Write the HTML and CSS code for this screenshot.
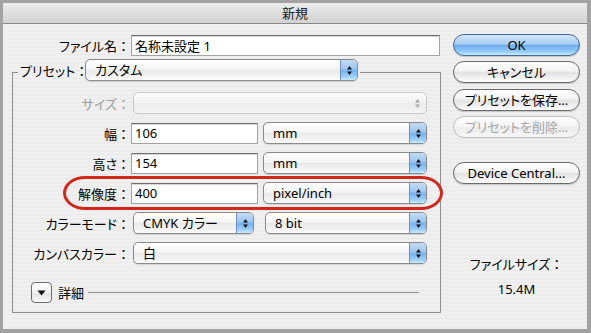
FILE: index.html
```html
<!DOCTYPE html>
<html lang="ja">
<head>
  <meta charset="UTF-8" />
  <title>新規</title>
  <link rel="stylesheet" href="styles.css">
</head>
<body>
  <div class="window">
    <div class="titlebar">新規</div>

    <div class="dialog">
      <div class="main">
        <div class="name-row">
          <label class="name-label" for="filename">ファイル名<span class="colon">：</span></label>
          <input class="field name-field" id="filename" type="text" value="名称未設定 1">
        </div>

        <fieldset class="group">
          <legend class="group-legend">
            <span class="legend-label">プリセット<span class="colon">：</span></span>
            <div class="popup preset-popup">
              <span class="popup-text">カスタム</span>
              <span class="popup-arrows"><svg width="7" height="13" viewBox="0 0 7 13"><path d="M3.5 2 L6 5.5 H1 Z M3.5 11 L6 7.5 H1 Z" fill="#111"/></svg></span>
            </div>
          </legend>

          <div class="rows">
            <span class="row-label disabled">サイズ<span class="colon">：</span></span>
            <div class="row-fields">
              <div class="popup popup-disabled full">
                <span class="popup-text"></span>
                <span class="popup-arrows"><svg width="7" height="13" viewBox="0 0 7 13"><path d="M3.5 2 L6 5.5 H1 Z M3.5 11 L6 7.5 H1 Z" fill="#a6a6a6"/></svg></span>
              </div>
            </div>

            <span class="row-label">幅<span class="colon">：</span></span>
            <div class="row-fields">
              <input class="field num-field" type="text" value="106">
              <div class="popup unit-popup">
                <span class="popup-text">mm</span>
                <span class="popup-arrows"><svg width="7" height="13" viewBox="0 0 7 13"><path d="M3.5 2 L6 5.5 H1 Z M3.5 11 L6 7.5 H1 Z" fill="#111"/></svg></span>
              </div>
            </div>

            <span class="row-label">高さ<span class="colon">：</span></span>
            <div class="row-fields">
              <input class="field num-field" type="text" value="154">
              <div class="popup unit-popup">
                <span class="popup-text">mm</span>
                <span class="popup-arrows"><svg width="7" height="13" viewBox="0 0 7 13"><path d="M3.5 2 L6 5.5 H1 Z M3.5 11 L6 7.5 H1 Z" fill="#111"/></svg></span>
              </div>
            </div>

            <span class="row-label">解像度<span class="colon">：</span></span>
            <div class="row-fields">
              <input class="field num-field" type="text" value="400">
              <div class="popup unit-popup">
                <span class="popup-text">pixel/inch</span>
                <span class="popup-arrows"><svg width="7" height="13" viewBox="0 0 7 13"><path d="M3.5 2 L6 5.5 H1 Z M3.5 11 L6 7.5 H1 Z" fill="#111"/></svg></span>
              </div>
            </div>

            <span class="row-label">カラーモード<span class="colon">：</span></span>
            <div class="row-fields">
              <div class="popup mode-popup">
                <span class="popup-text">CMYK カラー</span>
                <span class="popup-arrows"><svg width="7" height="13" viewBox="0 0 7 13"><path d="M3.5 2 L6 5.5 H1 Z M3.5 11 L6 7.5 H1 Z" fill="#111"/></svg></span>
              </div>
              <div class="popup bit-popup">
                <span class="popup-text">8 bit</span>
                <span class="popup-arrows"><svg width="7" height="13" viewBox="0 0 7 13"><path d="M3.5 2 L6 5.5 H1 Z M3.5 11 L6 7.5 H1 Z" fill="#111"/></svg></span>
              </div>
            </div>

            <span class="row-label">カンバスカラー<span class="colon">：</span></span>
            <div class="row-fields">
              <div class="popup full">
                <span class="popup-text">白</span>
                <span class="popup-arrows"><svg width="7" height="13" viewBox="0 0 7 13"><path d="M3.5 2 L6 5.5 H1 Z M3.5 11 L6 7.5 H1 Z" fill="#111"/></svg></span>
              </div>
            </div>

            <div class="highlight"></div>
          </div>

          <div class="details">
            <button class="disclosure" type="button"><svg width="9" height="6" viewBox="0 0 9 6"><path d="M0.5 0.5 H8.5 L4.5 5.5 Z" fill="#111"/></svg></button>
            <span class="details-label">詳細</span>
            <span class="details-line"></span>
          </div>
        </fieldset>
      </div>

      <div class="side">
        <button class="btn btn-default" type="button">OK</button>
        <button class="btn" type="button">キャンセル</button>
        <button class="btn btn-save" type="button">プリセットを保存...</button>
        <button class="btn btn-disabled" type="button">プリセットを削除...</button>
        <button class="btn btn-device" type="button">Device Central...</button>
        <div class="filesize-label">ファイルサイズ<span class="colon">：</span></div>
        <div class="filesize-value">15.4M</div>
      </div>
    </div>
  </div>
</body>
</html>
```

FILE: styles.css
```css
* {
  box-sizing: border-box;
}
body {
  margin: 0;
  background: #a2a2a2;
  font-family: 'Noto Sans', 'Noto Sans CJK JP', sans-serif;
  font-size: 13px;
  font-feature-settings: "palt";
  color: #000;
}
.colon {
  font-feature-settings: normal;
}
.window {
  margin: 3px 4px 4px 3px;
  height: 326px;
  background: repeating-linear-gradient(#f0f0f0 0, #f0f0f0 3px, #e9e9e9 3px, #e9e9e9 4px);
}
.titlebar {
  height: 21px;
  line-height: 20px;
  text-align: center;
  border-bottom: 1px solid #878787;
  background: linear-gradient(#ebebeb, #d3d3d3);
  color: #222;
}
.dialog {
  display: flex;
  gap: 12px;
  padding: 11px 0 0 9px;
}
.main {
  width: 429px;
}
.name-row {
  display: flex;
  align-items: center;
  height: 21px;
}
.name-label {
  width: 118px;
  margin-right: 1px;
  text-align: right;
  white-space: nowrap;
}
.field {
  height: 21px;
  margin: 0;
  padding: 0 3px;
  border: 1px solid #a3a3a3;
  border-top-color: #6e6e6e;
  box-shadow: inset 0 1px 0 #d6d6d6;
  background: #fff;
  font: inherit;
  color: #000;
  outline: none;
}
.name-field {
  width: 309px;
}
.num-field {
  width: 127px;
}
.group {
  position: relative;
  width: 429px;
  margin: 3px 0 0;
  padding: 0 0 9px;
  border: 1px solid #8f8f8f;
  min-width: 0;
}
.group-legend {
  display: flex;
  align-items: center;
  margin-left: 5px;
  padding: 0 2px 4px;
}
.legend-label {
  width: 65px;
  white-space: nowrap;
}
.rows {
  position: relative;
  display: grid;
  grid-template-columns: 118px 296px;
  grid-auto-rows: 22px;
  row-gap: 8px;
  margin-top: 7px;
}
.row-label {
  align-self: center;
  padding-right: 1px;
  text-align: right;
  white-space: nowrap;
}
.row-label.disabled {
  color: #9c9c9c;
}
.row-fields {
  display: flex;
  align-items: center;
}

/* popup menus */
.popup {
  display: flex;
  height: 22px;
  border: 1px solid #8a8a8a;
  border-radius: 5px;
  overflow: hidden;
  background: linear-gradient(#ffffff, #f5f5f5 45%, #e9e9e9 52%, #f4f4f4 85%, #fdfdfd);
  box-shadow: 0 1px 1px rgba(0, 0, 0, 0.12);
}
.popup-text {
  flex: 1;
  padding-left: 9px;
  line-height: 20px;
  white-space: nowrap;
}
.popup-arrows {
  display: flex;
  align-items: center;
  justify-content: center;
  width: 17px;
  border-left: 1px solid #6d8fc2;
  background: linear-gradient(#c3dcf6, #9ec6f0 45%, #75b1ee 52%, #9fd0fb 85%, #c9ecff);
}
.popup-disabled {
  border-color: #c9c9c9;
  box-shadow: none;
  background: linear-gradient(#fbfbfb, #f2f2f2 50%, #ececec 52%, #f5f5f5);
}
.popup-disabled .popup-arrows {
  border-left: none;
  background: none;
}
.preset-popup {
  width: 273px;
}
.full {
  width: 294px;
  margin-left: 2px;
}
.unit-popup {
  width: 164px;
  margin-left: 5px;
}
.mode-popup {
  width: 121px;
  margin-left: 2px;
}
.bit-popup {
  width: 162px;
  margin-left: 11px;
}

.highlight {
  position: absolute;
  left: 50px;
  top: 84px;
  width: 380px;
  height: 34px;
  border: 3px solid #d2281c;
  border-radius: 22px / 17px;
}

.details {
  display: flex;
  align-items: center;
  margin: 18px 21px 0 18px;
}
.disclosure {
  display: flex;
  align-items: center;
  justify-content: center;
  width: 21px;
  height: 21px;
  padding: 0;
  border: 1px solid #6c6c6c;
  border-radius: 4px;
  background: linear-gradient(#ffffff, #f2f2f2 50%, #e4e4e4 52%, #fafafa);
}
.details-label {
  margin-left: 6px;
}
.details-line {
  flex: 1;
  height: 1px;
  margin-left: 4px;
  background: #8c8c8c;
}

/* push buttons */
.side {
  width: 127px;
  margin-top: -1px;
  display: flex;
  flex-direction: column;
}
.btn {
  height: 22px;
  margin: 0 0 5px;
  padding: 0;
  border: 1px solid #6a6a6a;
  border-radius: 11px;
  background: linear-gradient(#ffffff, #f3f3f3 45%, #e3e3e3 52%, #f4f4f4 85%, #ffffff);
  box-shadow: 0 1px 1px rgba(0, 0, 0, 0.18);
  font: inherit;
  color: #000;
  line-height: 20px;
}
.btn-default {
  border-color: #46679a;
  background: linear-gradient(#d3e6fa, #a9cdf4 45%, #70abec 52%, #97cdfb 85%, #cdeeff);
}
.btn-save {
  margin-top: 1px;
}
.btn-disabled {
  border-color: #bdbdbd;
  color: #a6a6a6;
  box-shadow: none;
  background: linear-gradient(#fdfdfd, #f4f4f4 50%, #ececec 52%, #f7f7f7);
}
.btn-device {
  margin-top: 19px;
}
.filesize-label {
  margin-top: 67px;
  text-align: center;
  line-height: 16px;
}
.filesize-value {
  margin-top: 9px;
  text-align: center;
  line-height: 16px;
}
```
